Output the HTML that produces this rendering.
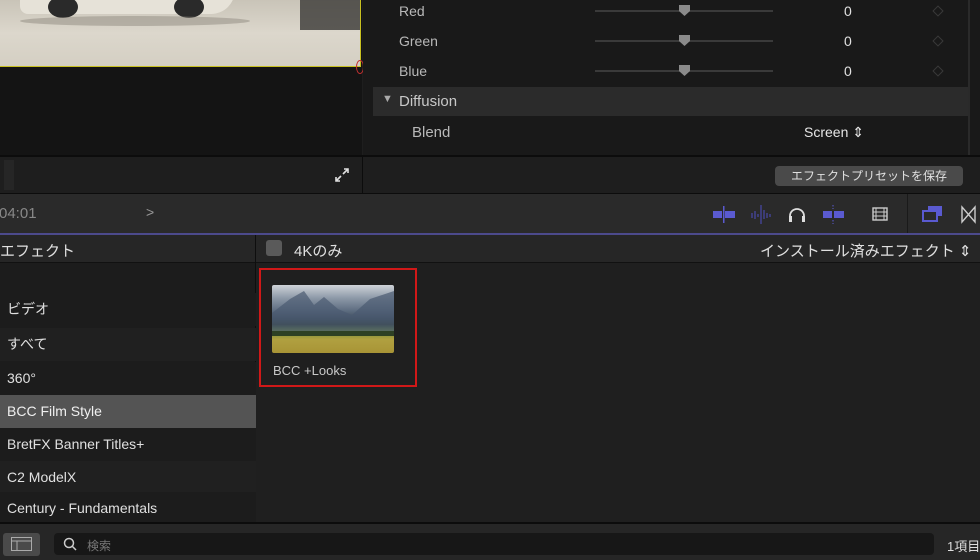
<!DOCTYPE html>
<html><head><meta charset="utf-8"><style>
*{margin:0;padding:0;box-sizing:border-box}
body{width:980px;height:560px;overflow:hidden;background:#1e1e1e;font-family:"Liberation Sans","Noto Sans CJK JP",sans-serif;color:#d0d0d0;position:relative}
.a{position:absolute}
.t{position:absolute;font-size:14px;white-space:nowrap}
.sl{position:absolute;left:595px;width:178px;height:2px;background:#3a3a3a}
.th{position:absolute;width:11px;height:11px;background:#8a8a8a;clip-path:polygon(0 0,100% 0,100% 55%,50% 100%,0 55%)}
.dm{position:absolute;width:8px;height:8px;border:1px solid #3a3a3a;transform:rotate(45deg)}
.row{position:absolute;left:0;width:256px;height:33px;font-size:14px;padding-left:7px;line-height:33px;color:#e0e0e0}
</style></head><body>
<!-- viewer -->
<div class="a" style="left:0;top:0;width:362px;height:155px;background:#141414"></div>
<div class="a" style="left:0;top:0;width:361px;height:67px;background:linear-gradient(180deg,#c9c4b8 0%,#dcd7cc 50%,#d4cfc3 100%);border-bottom:1px solid #c8c020;border-right:1px solid #c8c020;overflow:hidden">
 <div class="a" style="left:20px;top:-10px;width:215px;height:24px;background:#e6e2d8;border-radius:0 0 30px 10px"></div>
 <div class="a" style="left:48px;top:-4px;width:30px;height:22px;border-radius:50%;background:#2a2a2a"></div>
 <div class="a" style="left:174px;top:-4px;width:30px;height:22px;border-radius:50%;background:#2a2a2a"></div>
 <div class="a" style="left:20px;top:16px;width:230px;height:10px;background:#8f8a80;opacity:.5;border-radius:50%"></div>
 <div class="a" style="left:300px;top:0;width:60px;height:30px;background:#3a3836;opacity:.8"></div>
</div>
<div class="a" style="left:356px;top:60px;width:8px;height:14px;border:1px solid #c03030;border-radius:50%"></div>
<!-- inspector -->
<div class="a" style="left:363px;top:0;width:617px;height:155px;background:#191919"></div>
<div class="a" style="left:373px;top:87px;width:596px;height:29px;background:#2b2b2b"></div>
<div class="a" style="left:968px;top:0;width:2px;height:155px;background:#2a2a2a"></div>
<div class="t" style="left:399px;top:3px;color:#b8b8b8">Red</div>
<div class="t" style="left:399px;top:33px;color:#b8b8b8">Green</div>
<div class="t" style="left:399px;top:63px;color:#b8b8b8">Blue</div>
<div class="sl" style="top:10px"></div><div class="th" style="left:679px;top:5px"></div>
<div class="sl" style="top:40px"></div><div class="th" style="left:679px;top:35px"></div>
<div class="sl" style="top:70px"></div><div class="th" style="left:679px;top:65px"></div>
<div class="t" style="left:844px;top:3px;color:#e0e0e0">0</div>
<div class="t" style="left:844px;top:33px;color:#e0e0e0">0</div>
<div class="t" style="left:844px;top:63px;color:#e0e0e0">0</div>
<div class="dm" style="left:934px;top:7px"></div><div class="dm" style="left:934px;top:37px"></div><div class="dm" style="left:934px;top:67px"></div>
<div class="t" style="left:382px;top:93px;font-size:11px;color:#aaa">▼</div>
<div class="t" style="left:399px;top:93px;font-size:15px;color:#c8c8c8">Diffusion</div>
<div class="t" style="left:412px;top:124px;font-size:15px;color:#b8b8b8">Blend</div>
<div class="t" style="left:804px;top:124px;font-size:14px;color:#e6e6e6">Screen ⇕</div>
<!-- row 2 -->
<div class="a" style="left:0;top:155px;width:980px;height:2px;background:#0c0c0c"></div>
<div class="a" style="left:0;top:157px;width:980px;height:37px;background:#1e1e1e"></div>
<div class="a" style="left:362px;top:155px;width:1px;height:39px;background:#0c0c0c"></div>
<div class="a" style="left:4px;top:160px;width:10px;height:30px;background:#262626"></div>
<svg class="a" style="left:333px;top:166px" width="18" height="18" viewBox="0 0 18 18" fill="none" stroke="#e0e0e0" stroke-width="1.6"><path d="M11 3h4v4M15 3l-5 5M7 15H3v-4M3 15l5-5"/></svg>
<div class="a" style="left:775px;top:166px;width:188px;height:20px;background:#4a4a4a;border-radius:4px;font-size:12px;line-height:20px;text-align:center;color:#e0e0e0">エフェクトプリセットを保存</div>
<!-- toolbar -->
<div class="a" style="left:0;top:193px;width:980px;height:1px;background:#0c0c0c"></div>
<div class="a" style="left:0;top:194px;width:980px;height:39px;background:#2a2a2a"></div>
<div class="t" style="left:-1px;top:205px;color:#888;font-size:15px">04:01</div>
<div class="t" style="left:146px;top:204px;color:#999;font-size:14px">&gt;</div>
<div class="a" style="left:907px;top:194px;width:1px;height:39px;background:#1a1a1a"></div>
<svg class="a" style="left:710px;top:203px" width="270" height="24" viewBox="0 0 270 24">
 <g fill="#5a5ad0"><rect x="3" y="8" width="9" height="7"/><rect x="15" y="8" width="10" height="7"/><rect x="13" y="3" width="1.5" height="17"/>
 <g stroke="#4848a8" stroke-width="1.2"><path d="M42 10v5M45 8v8M48 11v3M51 2v19M54 7v9M57 10v5M60 11v3"/></g>
 <rect x="113" y="8" width="9" height="7"/><rect x="124" y="8" width="10" height="7"/></g>
 <path d="M80 18v-5a7 7 0 0 1 14 0v5" fill="none" stroke="#ddd" stroke-width="1.8"/><rect x="79" y="13" width="3" height="6" fill="#ddd"/><rect x="92" y="13" width="3" height="6" fill="#ddd"/>
 <g stroke="#5a5ad0" stroke-dasharray="1.5 1.5"><path d="M123 2v4M123 17v4"/></g>
 <rect x="163" y="5" width="14" height="12" fill="none" stroke="#ccc" stroke-width="1.4"/><path d="M166 5v12M174 5v12M163 9h14M163 13h14" stroke="#ccc"/>
 <rect x="218" y="3" width="14" height="10" fill="#5a5ad0"/><rect x="213" y="8" width="14" height="10" fill="#2a2a2a" stroke="#5a5ad0" stroke-width="2"/>
 <path d="M252 4v15l13-15v15z" fill="none" stroke="#ccc" stroke-width="1.4"/>
</svg>
<!-- header -->
<div class="a" style="left:0;top:233px;width:980px;height:2px;background:#4c4a8c"></div>
<div class="a" style="left:0;top:235px;width:980px;height:27px;background:#262626"></div>
<div class="a" style="left:0;top:262px;width:980px;height:1px;background:#111"></div>
<div class="a" style="left:255px;top:235px;width:1px;height:288px;background:#0e0e0e"></div>
<div class="t" style="left:0;top:240px;font-size:15px;color:#e0e0e0">エフェクト</div>
<div class="a" style="left:266px;top:240px;width:16px;height:16px;background:#5a5a5a;border-radius:3px"></div>
<div class="t" style="left:294px;top:240px;font-size:15px;color:#e0e0e0">4Kのみ</div>
<div class="t" style="left:760px;top:240px;font-size:15px;color:#e0e0e0">インストール済みエフェクト ⇕</div>
<!-- list -->
<div class="a" style="left:0;top:263px;width:255px;height:260px;background:#1c1c1c"></div>
<div class="row" style="top:293px;background:#1c1c1c">ビデオ</div>
<div class="row" style="top:328px;background:#202020">すべて</div>
<div class="row" style="top:362px;background:#1c1c1c">360°</div>
<div class="row" style="top:395px;background:#545454;color:#f0f0f0">BCC Film Style</div>
<div class="row" style="top:428px;background:#1c1c1c">BretFX Banner Titles+</div>
<div class="row" style="top:461px;background:#202020">C2 ModelX</div>
<div class="row" style="top:492px;background:#1c1c1c">Century - Fundamentals</div>
<!-- right pane -->
<div class="a" style="left:256px;top:263px;width:724px;height:260px;background:#1f1f1f"></div>
<div class="a" style="left:259px;top:268px;width:158px;height:119px;border:2px solid #d01818"></div>
<div class="a" style="left:272px;top:285px;width:122px;height:68px;border-radius:2px;background:linear-gradient(180deg,#cfd3d8 0%,#8b97a6 20%,#5d6c80 38%,#3e4c5c 50%,#2c3a30 58%,#6f8a3a 66%,#b0a040 80%,#a89436 100%)"></div>
<svg class="a" style="left:272px;top:285px" width="122" height="68"><path d="M0 28L18 14 32 6 42 20 52 12 66 24 80 30 98 14 122 6V48H0z" fill="#4a5a70" opacity=".7"/><path d="M0 46h122v5H0z" fill="#2e4024"/></svg>
<div class="t" style="left:273px;top:363px;font-size:13px;color:#c8c8c8">BCC +Looks</div>
<!-- bottom -->
<div class="a" style="left:0;top:522px;width:980px;height:2px;background:#0c0c0c"></div>
<div class="a" style="left:0;top:524px;width:980px;height:36px;background:#262626"></div>
<div class="a" style="left:3px;top:533px;width:37px;height:23px;background:#4a4a4a;border-radius:3px"></div>
<svg class="a" style="left:11px;top:537px" width="22" height="15"><rect x=".5" y=".5" width="20" height="13" fill="none" stroke="#aaa"/><path d="M.5 4h20M6 4v10" stroke="#aaa"/></svg>
<div class="a" style="left:54px;top:533px;width:880px;height:22px;background:#171717;border-radius:4px"></div>
<svg class="a" style="left:63px;top:537px" width="14" height="14" fill="none" stroke="#ccc" stroke-width="1.5"><circle cx="6" cy="6" r="4.5"/><path d="M9.5 9.5l3.5 3.5"/></svg>
<div class="t" style="left:87px;top:537px;font-size:12px;color:#777">検索</div>
<div class="t" style="left:947px;top:536px;font-size:13px;color:#ddd">1項目</div>
</body></html>
